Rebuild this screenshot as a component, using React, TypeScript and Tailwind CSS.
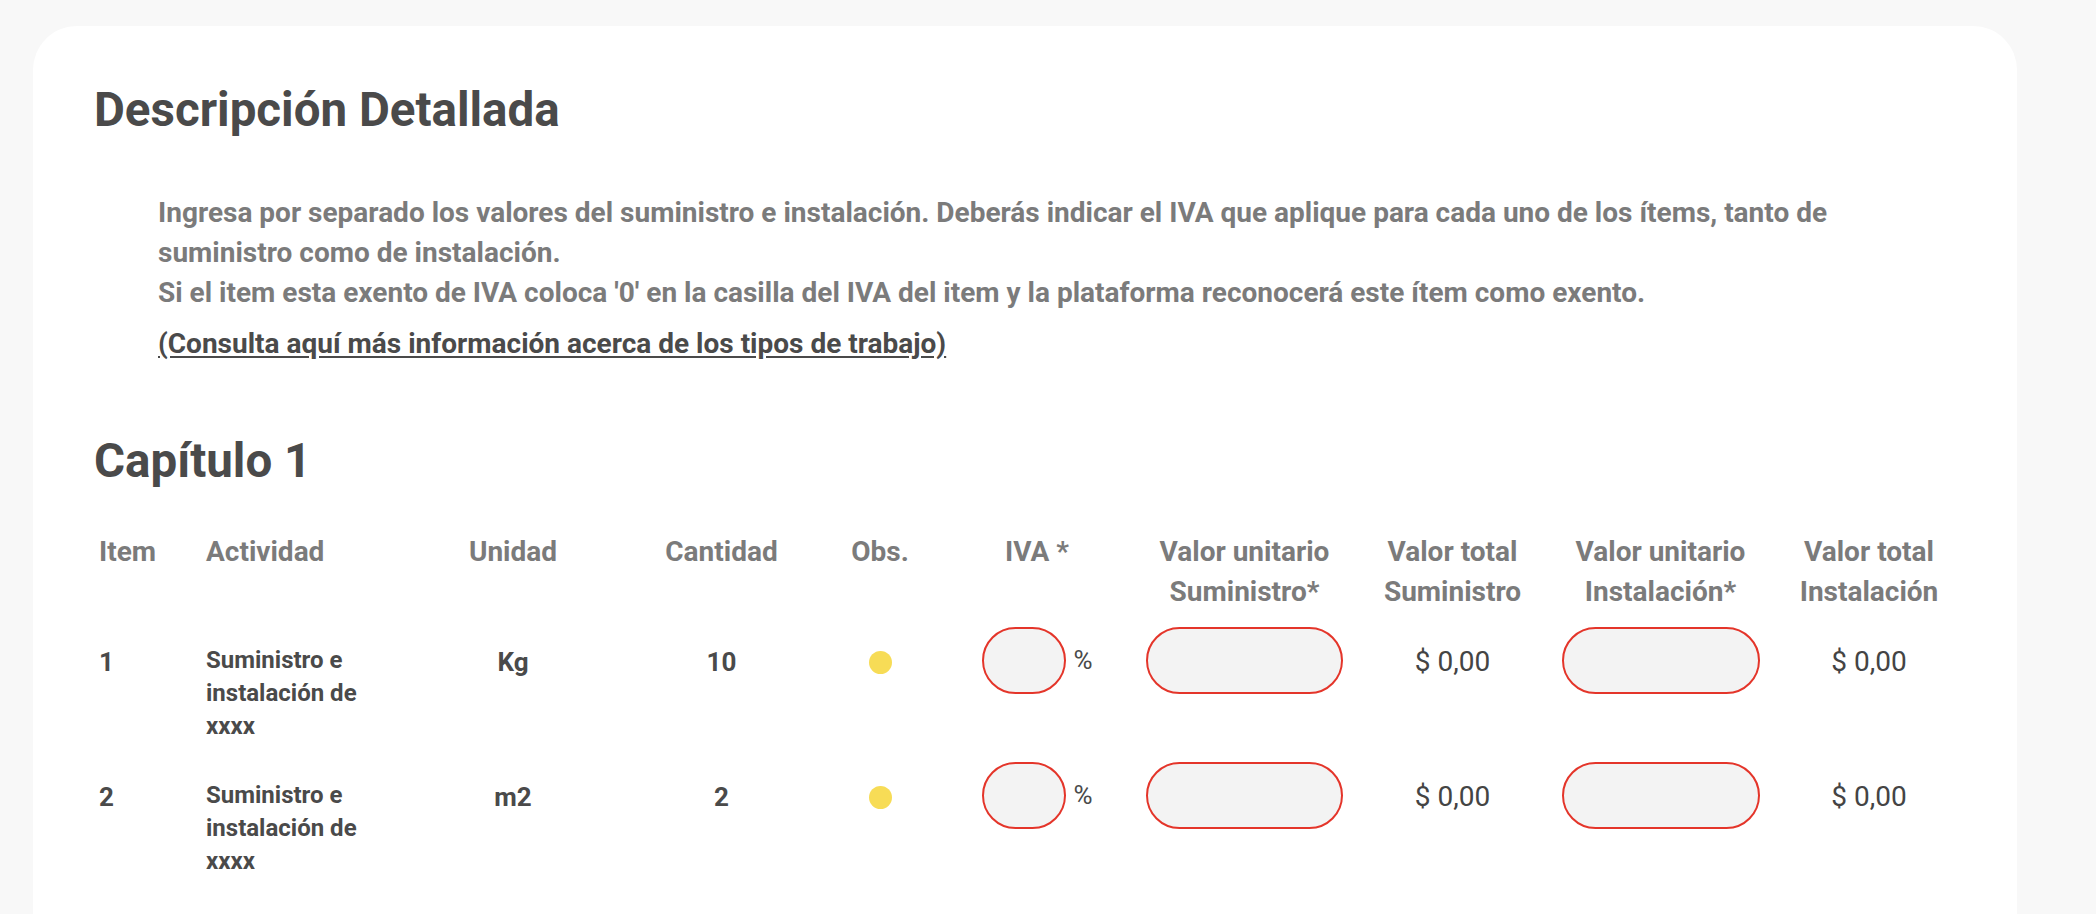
import React from "react";

type Row = { id: number; actividad: string; unidad: string; cantidad: string };

const rows: Row[] = [
  { id: 1, actividad: "Suministro e instalación de xxxx", unidad: "Kg", cantidad: "10" },
  { id: 2, actividad: "Suministro e instalación de xxxx", unidad: "m2", cantidad: "2" },
];

const cols = "grid grid-cols-[106px_209px_208px_209px_108px_206px_209px_207px_209px_208px]";

function MoneyInput({ w }: { w: string }) {
  return <input className={`${w} h-[67px] rounded-full border-2 border-[#e4352a] bg-[#f3f3f3] outline-none`} />;
}

export default function App() {
  return (
    <div className="min-h-screen bg-[#f8f8f8] pt-[26px] pl-[33px] overflow-hidden" style={{ fontFamily: "Roboto, 'Noto Sans', sans-serif" }}>
      <div className="w-[1984px] rounded-[44px] bg-white pt-[57px] pl-[61px] pr-[44px] pb-[120px]">
        {/* ------------------------------ */}
        {/* Encabezado */}
        {/* ------------------------------ */}
        <h1 className="text-[47.5px] leading-[55px] font-bold text-[#4a4a4a]">Descripción Detallada</h1>

        <div className="pl-[64px] mt-[55px] w-[1784px]">
          <p className="text-[28px] leading-[40px] font-bold text-[#7b7b7b]">
            Ingresa por separado los valores del suministro e instalación. Deberás indicar el IVA que aplique para cada uno de los ítems, tanto de suministro como de instalación.
            <br />
            Si el item esta exento de IVA coloca '0' en la casilla del IVA del item y la plataforma reconocerá este ítem como exento.
          </p>
          <a href="#" className="block mt-[11px] text-[28px] leading-[40px] font-bold text-[#4a4a4a] underline underline-offset-[3px]">
            (Consulta aquí más información acerca de los tipos de trabajo)
          </a>
        </div>

        <h2 className="mt-[70px] text-[47.5px] leading-[55px] font-bold text-[#4a4a4a]">Capítulo 1</h2>

        {/* ------------------------------ */}
        {/* Tabla */}
        {/* ------------------------------ */}
        <div className={`${cols} mt-[43px] text-[28px] leading-[40px] font-bold text-[#7b7b7b]`}>
          <div className="pl-[5px]">Item</div>
          <div className="pl-[6px]">Actividad</div>
          <div className="text-center">Unidad</div>
          <div className="text-center">Cantidad</div>
          <div className="text-center">Obs.</div>
          <div className="text-center">IVA *</div>
          <div className="text-center">Valor unitario<br />Suministro*</div>
          <div className="text-center">Valor total<br />Suministro</div>
          <div className="text-center">Valor unitario<br />Instalación*</div>
          <div className="text-center">Valor total<br />Instalación</div>
        </div>

        <div className="mt-[15px]">
          {rows.map((r) => (
            <div key={r.id} className={`${cols} items-start`}>
              <div className="h-[67px] pl-[5px] pt-[4px] flex items-center text-[26px] font-bold text-[#4a4a4a]">{r.id}</div>
              <div className="pl-[6px] pt-[17px] pb-[19px]">
                <div className="w-[175px] text-[24px] leading-[33px] font-bold text-[#4a4a4a]">{r.actividad}</div>
              </div>
              <div className="h-[67px] pt-[4px] flex items-center justify-center text-[26px] font-bold text-[#4a4a4a]">{r.unidad}</div>
              <div className="h-[67px] pt-[4px] flex items-center justify-center text-[26px] font-bold text-[#4a4a4a]">{r.cantidad}</div>
              <div className="h-[67px] pt-[4px] flex items-center justify-center">
                <span className="block w-[23px] h-[23px] rounded-full bg-[#f7dc56]" />
              </div>
              <div className="h-[67px] flex items-center justify-center gap-[7px] pl-[1px]">
                <MoneyInput w="w-[84px]" />
                <span className="text-[26px] text-[#4a4a4a]">%</span>
              </div>
              <div className="h-[67px] flex items-center justify-center">
                <MoneyInput w="w-[197px]" />
              </div>
              <div className="h-[67px] pt-[3px] flex items-center justify-center text-[28px] text-[#444]">$ 0,00</div>
              <div className="h-[67px] flex items-center justify-center">
                <MoneyInput w="w-[198px]" />
              </div>
              <div className="h-[67px] pt-[3px] flex items-center justify-center text-[28px] text-[#444]">$ 0,00</div>
            </div>
          ))}
        </div>
      </div>
    </div>
  );
}
